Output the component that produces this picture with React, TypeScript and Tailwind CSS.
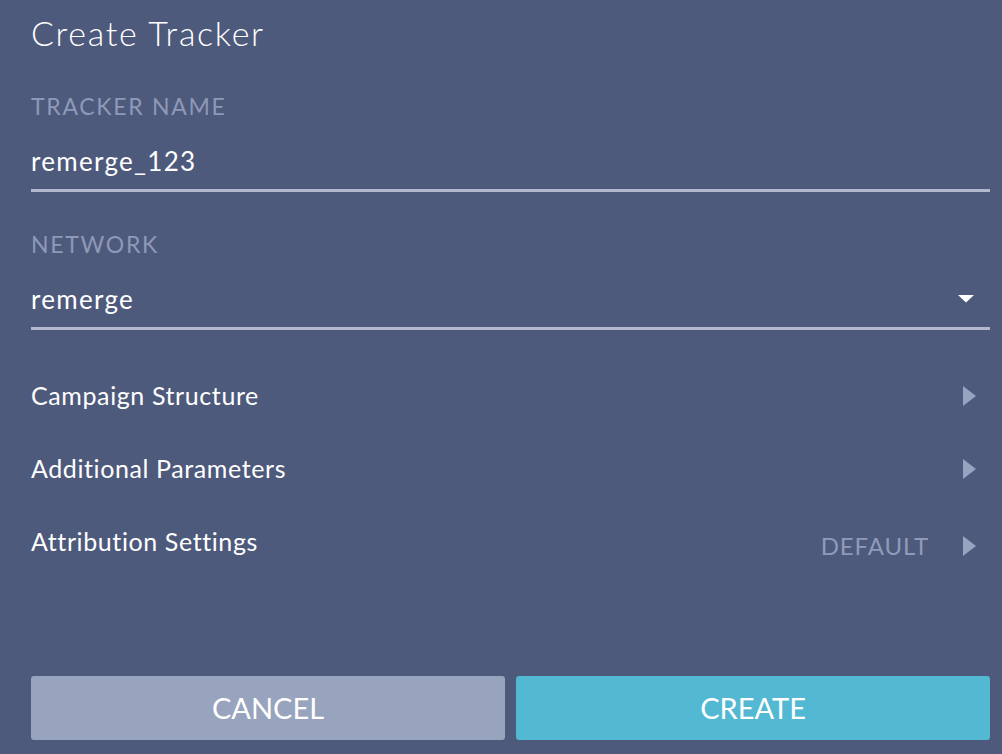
const font = { fontFamily: 'Lato, "Open Sans", sans-serif' }

const Arrow = () => (
  <svg width="13" height="20" viewBox="0 0 13 20" className="shrink-0">
    <path d="M0 0 L13 10 L0 20 Z" fill="#98a3bf" />
  </svg>
)

const Row = ({ label, extra }: { label: string; extra?: string }) => (
  <div className="flex items-center h-[73px]">
    <span className="text-white text-[25px] leading-none tracking-[0.6px] flex-1">{label}</span>
    <div className={extra ? 'flex items-center pt-[8px]' : 'flex items-center'}>
      {extra && <span className="text-[#8f9abb] text-[24px] leading-none tracking-[0.9px] mr-[34px]">{extra}</span>}
      <div className="mr-[14px] flex">
        <Arrow />
      </div>
    </div>
  </div>
)

const Field = ({ label, value, select }: { label: string; value: string; select?: boolean }) => (
  <div>
    <div className="text-[#8e98b7] text-[23px] tracking-[1.7px] leading-none">{label}</div>
    <div className="flex items-center mt-[30px] pb-[15px] border-b-[3px] border-[#b3b8cf]">
      <span className="text-white text-[26px] tracking-[1.3px] leading-none flex-1">{value}</span>
      {select && (
        <svg width="16" height="8" viewBox="0 0 16 8" className="mr-[16px]">
          <path d="M0 0 H16 L8 7.5 Z" fill="#ffffff" />
        </svg>
      )}
    </div>
  </div>
)

export default function App() {
  return (
    <div className="w-[1002px] h-[754px] bg-[#4e5a7c] pl-[31px] pr-[12px] flex flex-col" style={font}>
      <h1 className="text-white text-[34px] font-light tracking-[1.7px] leading-none mt-[16px]">Create Tracker</h1>

      <div className="mt-[45px]">
        <Field label="TRACKER NAME" value="remerge_123" />
      </div>
      <div className="mt-[41px]">
        <Field label="NETWORK" value="remerge" select />
      </div>

      <div className="pt-[29px]">
        <Row label="Campaign Structure" />
        <Row label="Additional Parameters" />
        <Row label="Attribution Settings" extra="DEFAULT" />
      </div>

      <div className="flex-1" />

      <div className="flex gap-[11px] pb-[14px]">
        <button className="flex-1 h-[64px] rounded-[3px] bg-[#98a3bd] text-white text-[29px]">CANCEL</button>
        <button className="flex-1 h-[64px] rounded-[3px] bg-[#53b9d3] text-white text-[29px]">CREATE</button>
      </div>
    </div>
  )
}
